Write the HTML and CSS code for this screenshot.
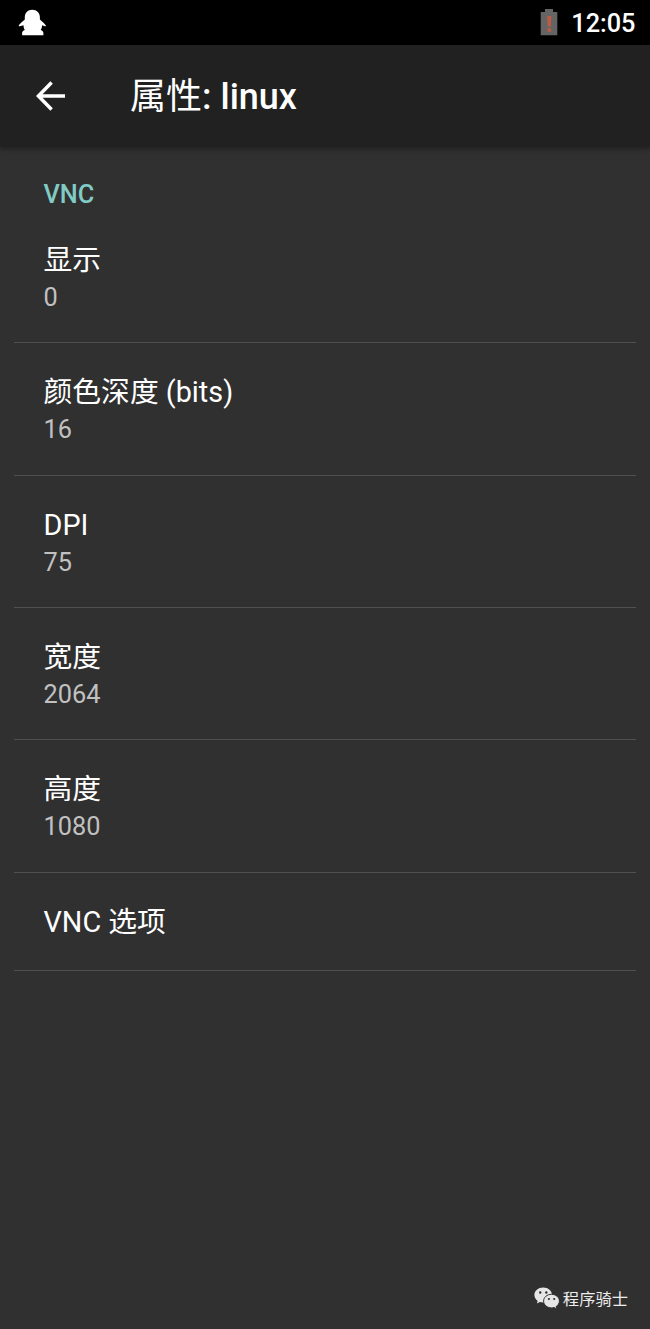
FILE: index.html
```html
<!DOCTYPE html>
<html lang="zh-CN">
<head>
<meta charset="utf-8">
<title>属性: linux</title>
<link rel="stylesheet" href="styles.css">
</head>
<body>
<div class="screen">
  <header class="status">
    <svg class="penguin" width="28" height="27" viewBox="0 0 28 27"><path fill="#fff" d="M14.200.7C9.600.7 6.800 4 6.800 8.200v2.200C4.700 12.400 1.700 14.700.9 16.200c-.4.8.1 1.200.9 1l3.700-.9c.1 2 .5 3.500 1.300 4.800-1.700.6-2.700 1.600-2.700 3v2.100h21.300v-2.100c0-1.400-1-2.400-2.700-3 .8-1.300 1.300-2.800 1.400-4.800l2.700.9c.9.3 1.300-.2.9-1-.9-1.700-3.700-4-5.800-5.800V8.200C21.900 4 18.900.7 14.200.7z"/></svg>
    <div class="status-right">
      <svg width="18" height="27" viewBox="0 0 18 27"><path fill="#646464" d="M5 0h8v3h4.300v23.300H.7V3H5z"/><path fill="#bd5a42" d="M7.200 7h4.100l-.5 10.500H7.700zM7.400 19.300h3.700v3.400H7.400z"/></svg>
      <span class="clock">12:05</span>
    </div>
  </header>
  <nav class="toolbar">
    <svg class="back" width="30" height="30" viewBox="0 0 30 30" fill="none" stroke="#fff" stroke-width="3.500"><path d="M29 15H3M15.600 1.600L2.400 15l13.200 13.400"/></svg>
    <h1 class="title"><span class="han">属性</span>: linux</h1>
  </nav>
  <main class="list">
    <h2 class="category">VNC</h2>
    <section class="row"><div class="name">显示</div><div class="value">0</div></section>
    <section class="row"><div class="name">颜色深度 (bits)</div><div class="value">16</div></section>
    <section class="row"><div class="name">DPI</div><div class="value">75</div></section>
    <section class="row"><div class="name">宽度</div><div class="value">2064</div></section>
    <section class="row"><div class="name">高度</div><div class="value">1080</div></section>
    <section class="row single"><div class="name">VNC 选项</div></section>
  </main>
  <footer class="credit">
    <svg width="26" height="23" viewBox="0 0 26 23"><path fill="#e6e6e6" d="M9.200.5C4.300.5.400 3.800.400 8c0 2.400 1.300 4.500 3.300 5.900l-.8 2.600 3-1.500c1 .3 2.100.5 3.300.5 4.900 0 8.800-3.300 8.800-7.500S14.100.5 9.200.5z"/><path fill="#e6e6e6" stroke="#303030" d="M17.500 7.300c-4.400 0-7.900 3-7.900 6.800s3.500 6.800 7.900 6.800c.9 0 1.800-.1 2.600-.4l2.700 1.500-.7-2.400c2-1.300 3.300-3.300 3.300-5.500 0-3.800-3.500-6.800-7.900-6.800z"/><g fill="#303030"><circle cx="6.200" cy="5.500" r="1.200"/><circle cx="12.300" cy="5.500" r="1.200"/><circle cx="14.900" cy="12" r="1.100"/><circle cx="20.200" cy="12" r="1.100"/></g></svg>
    <span>程序骑士</span>
  </footer>
</div>
</body>
</html>
```
FILE: styles.css
```css
* { box-sizing: border-box; }
body {
  margin: 0;
  background: #303030;
  color: #fff;
  font-family: Roboto, "Noto Sans CJK SC", sans-serif;
}
.screen {
  display: flex;
  flex-direction: column;
  height: 1329px;
}
.status {
  display: flex;
  justify-content: space-between;
  align-items: center;
  height: 45px;
  padding: 0 14.500px 0 18px;
  background: #000;
}
.status-right {
  display: flex;
  align-items: center;
  gap: 13px;
}
.clock {
  font-size: 25.300px;
  font-weight: 500;
  line-height: 30px;
  padding-top: 3px;
}
.toolbar {
  display: flex;
  align-items: center;
  gap: 64px;
  height: 102px;
  padding-left: 36px;
  background: #212121;
  box-shadow: 0 2px 5px rgba(0, 0, 0, .35);
}
.title {
  margin: 0;
  padding-top: 2px;
  font-size: 36px;
  font-weight: 500;
  line-height: 48px;
}
.han { font-weight: 400; }
.list {
  flex: 1;
  padding: 0 14px;
}
.category {
  height: 63.800px;
  margin: 0;
  padding: 32px 29.500px 0;
  color: #80cbc4;
  font-size: 25.300px;
  font-weight: 500;
  line-height: 32px;
}
.row {
  height: 132.400px;
  padding: 31px 29.500px 0;
  border-bottom: 1px solid #505050;
}
.row.single { height: 98px; }
.name {
  font-size: 28.800px;
  line-height: 37px;
}
.value {
  color: #c1c1c1;
  font-size: 25.300px;
  line-height: 38px;
}
.credit {
  display: flex;
  justify-content: flex-end;
  align-items: center;
  gap: 3px;
  height: 61px;
  padding-right: 22px;
  color: #ececec;
  font-size: 16.300px;
}
.credit span { margin-top: -1px; }
```
